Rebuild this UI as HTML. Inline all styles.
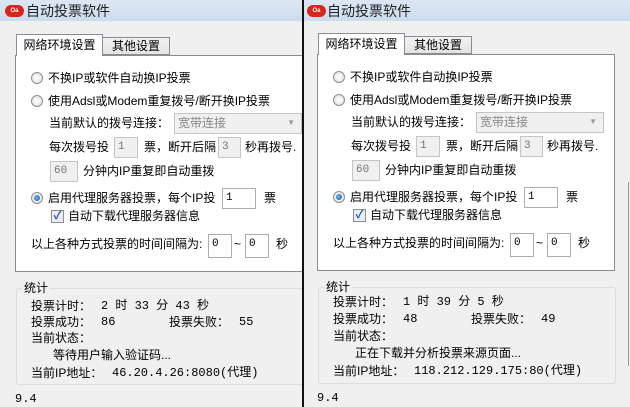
<!DOCTYPE html>
<html><head><meta charset="utf-8"><style>
*{margin:0;padding:0;box-sizing:border-box}
body{width:630px;height:407px;background:#f0f0f0;position:relative;overflow:hidden;font-family:"Liberation Sans","Noto Sans CJK SC",sans-serif;font-size:12px;color:#000}
.win{position:absolute;top:0;height:407px;overflow:hidden;background:#f0f0f0}
.tb{position:absolute;left:0;top:0;right:0;height:21px;background:linear-gradient(#dce7f4,#ccdcee)}
.ico{position:absolute;left:5px;top:5px;width:19px;height:12px;background:#d9261c;border-radius:6px;color:#fff;font-size:6px;line-height:12px;text-align:center;font-weight:bold}
.tt{position:absolute;left:26px;top:1px;font-size:14px;color:#222;white-space:nowrap}
.a{position:absolute;white-space:nowrap;line-height:16px}
.tab1{position:absolute;left:16px;top:34px;width:87px;height:22px;background:#fff;border:1px solid #898c95;border-bottom:none;z-index:2;text-align:center;line-height:20px;font-size:12px;white-space:nowrap}
.tab2{position:absolute;left:102px;top:37px;width:68px;height:18px;background:linear-gradient(#f2f2f2,#e3e3e3);border:1px solid #898c95;text-align:center;line-height:17px;font-size:12px;white-space:nowrap}
.panel{position:absolute;left:15px;top:55px;width:298px;height:217px;background:#fff;border:1px solid #898c95}
.rad{position:absolute;width:12px;height:12px;border-radius:50%;border:1px solid #8e8f8f;background:radial-gradient(#fff,#ddd)}
.rad.on::after{content:"";position:absolute;left:2px;top:2px;width:6px;height:6px;border-radius:50%;background:radial-gradient(circle at 40% 40%,#6ab0f0,#1c5aa8)}
.inp{position:absolute;height:21px;border:1px solid #abadb3;background:#fff;font-size:11px;padding-left:3px;line-height:18px;font-family:"Liberation Mono",monospace}
.dis{background:#f0f0f0;color:#777;border-color:#c5c5c5}
.chk{position:absolute;width:13px;height:13px;border:1px solid #8e8f8f;background:#e8eef6;color:#2a4aa0;font-size:11px;line-height:11px;text-align:center;font-weight:bold}
.grp{position:absolute;left:16px;top:288px;width:298px;height:97px;border:1px solid #dcdcdc;border-radius:3px}
.gl{position:absolute;left:22px;top:279px;background:#f0f0f0;padding:0 2px;font-size:12px;white-space:nowrap}
.m{font-family:"Liberation Mono",monospace;font-size:12px}
</style></head><body>

<div class="win" style="left:0;width:302px">
<div class="tb"><div class="ico">Oa</div><div class="tt">自动投票软件</div></div>
<div class="tab1">网络环境设置</div><div class="tab2">其他设置</div>
<div class="panel"></div>
<div class="rad" style="left:31px;top:72px"></div><div class="a" style="left:48px;top:70px">不换IP或软件自动换IP投票</div>
<div class="rad" style="left:31px;top:95px"></div><div class="a" style="left:48px;top:93px">使用Adsl或Modem重复拨号/断开换IP投票</div>
<div class="a" style="left:49px;top:115px">当前默认的拨号连接：</div>
<div class="inp dis" style="left:174px;top:113px;width:128px;font-family:'Liberation Sans','Noto Sans CJK SC',sans-serif;font-size:12px;color:#888">宽带连接<span style="position:absolute;right:6px;top:0;font-size:8px;color:#999">▼</span></div>
<div class="a" style="left:49px;top:139px">每次拨号投</div><div class="inp dis" style="left:114px;top:137px;width:24px">1</div>
<div class="a" style="left:144px;top:139px">票，断开后隔</div><div class="inp dis" style="left:218px;top:137px;width:23px">3</div>
<div class="a" style="left:245px;top:139px">秒再拨号.</div>
<div class="inp dis" style="left:50px;top:161px;width:28px">60</div><div class="a" style="left:83px;top:163px">分钟内IP重复即自动重拨</div>
<div class="rad on" style="left:31px;top:192px"></div><div class="a" style="left:48px;top:190px">启用代理服务器投票，每个IP投</div>
<div class="inp" style="left:222px;top:188px;width:34px">1</div><div class="a" style="left:264px;top:190px">票</div>
<div class="chk" style="left:51px;top:210px">✓</div><div class="a" style="left:68px;top:208px">自动下载代理服务器信息</div>
<div class="a" style="left:31px;top:236px">以上各种方式投票的时间间隔为:</div>
<div class="inp" style="left:208px;top:234px;width:24px;height:24px">0</div><div class="a" style="left:234px;top:236px">~</div>
<div class="inp" style="left:245px;top:234px;width:24px;height:24px">0</div><div class="a" style="left:276px;top:236px">秒</div>
<div class="grp"></div><div class="gl">统计</div>
<div class="a" style="left:31px;top:298px">投票计时：</div><div class="a m" style="left:101px;top:298px">2 时 33 分 43 秒</div>
<div class="a" style="left:31px;top:314px">投票成功：</div><div class="a m" style="left:101px;top:314px">86</div>
<div class="a" style="left:169px;top:314px">投票失败：</div><div class="a m" style="left:239px;top:314px">55</div>
<div class="a" style="left:31px;top:330px">当前状态：</div>
<div class="a" style="left:53px;top:347px">等待用户输入验证码...</div>
<div class="a" style="left:31px;top:365px">当前IP地址：</div><div class="a m" style="left:112px;top:365px">46.20.4.26:8080(代理)</div>
<div class="a m" style="left:15px;top:391px">9.4</div>
</div>
<div style="position:absolute;left:302px;top:0;width:2px;height:407px;background:#111"></div>

<div class="win" style="left:304px;width:326px">
<div class="tb"><div class="ico" style="left:3px">Oa</div><div class="tt" style="left:23px">自动投票软件</div></div>
<div style="position:absolute;top:0;left:0;width:330px;height:407px;transform:translate(-2px,-1px)">
<div class="tab1" style="left:16px">网络环境设置</div><div class="tab2">其他设置</div>
<div class="panel"></div>
<div class="rad" style="left:31px;top:72px"></div><div class="a" style="left:48px;top:70px">不换IP或软件自动换IP投票</div>
<div class="rad" style="left:31px;top:95px"></div><div class="a" style="left:48px;top:93px">使用Adsl或Modem重复拨号/断开换IP投票</div>
<div class="a" style="left:49px;top:115px">当前默认的拨号连接：</div>
<div class="inp dis" style="left:174px;top:113px;width:128px;font-family:'Liberation Sans','Noto Sans CJK SC',sans-serif;font-size:12px;color:#888">宽带连接<span style="position:absolute;right:6px;top:0;font-size:8px;color:#999">▼</span></div>
<div class="a" style="left:49px;top:139px">每次拨号投</div><div class="inp dis" style="left:114px;top:137px;width:24px">1</div>
<div class="a" style="left:144px;top:139px">票，断开后隔</div><div class="inp dis" style="left:218px;top:137px;width:23px">3</div>
<div class="a" style="left:245px;top:139px">秒再拨号.</div>
<div class="inp dis" style="left:50px;top:161px;width:28px">60</div><div class="a" style="left:83px;top:163px">分钟内IP重复即自动重拨</div>
<div class="rad on" style="left:31px;top:192px"></div><div class="a" style="left:48px;top:190px">启用代理服务器投票，每个IP投</div>
<div class="inp" style="left:222px;top:188px;width:34px">1</div><div class="a" style="left:264px;top:190px">票</div>
<div class="chk" style="left:51px;top:210px">✓</div><div class="a" style="left:68px;top:208px">自动下载代理服务器信息</div>
<div class="a" style="left:31px;top:236px">以上各种方式投票的时间间隔为:</div>
<div class="inp" style="left:208px;top:234px;width:24px;height:24px">0</div><div class="a" style="left:234px;top:236px">~</div>
<div class="inp" style="left:245px;top:234px;width:24px;height:24px">0</div><div class="a" style="left:276px;top:236px">秒</div>
<div class="grp"></div><div class="gl">统计</div>
<div class="a" style="left:31px;top:295px">投票计时：</div><div class="a m" style="left:101px;top:295px">1 时 39 分 5 秒</div>
<div class="a" style="left:31px;top:312px">投票成功：</div><div class="a m" style="left:101px;top:312px">48</div>
<div class="a" style="left:169px;top:312px">投票失败：</div><div class="a m" style="left:239px;top:312px">49</div>
<div class="a" style="left:31px;top:329px">当前状态：</div>
<div class="a" style="left:53px;top:346px">正在下载并分析投票来源页面...</div>
<div class="a" style="left:31px;top:364px">当前IP地址：</div><div class="a m" style="left:112px;top:364px">118.212.129.175:80(代理)</div>
<div class="a m" style="left:15px;top:391px">9.4</div>
</div>
<div style="position:absolute;left:324px;top:182px;width:2px;height:184px;border-left:1px solid #999"></div>
</div>
</body></html>
